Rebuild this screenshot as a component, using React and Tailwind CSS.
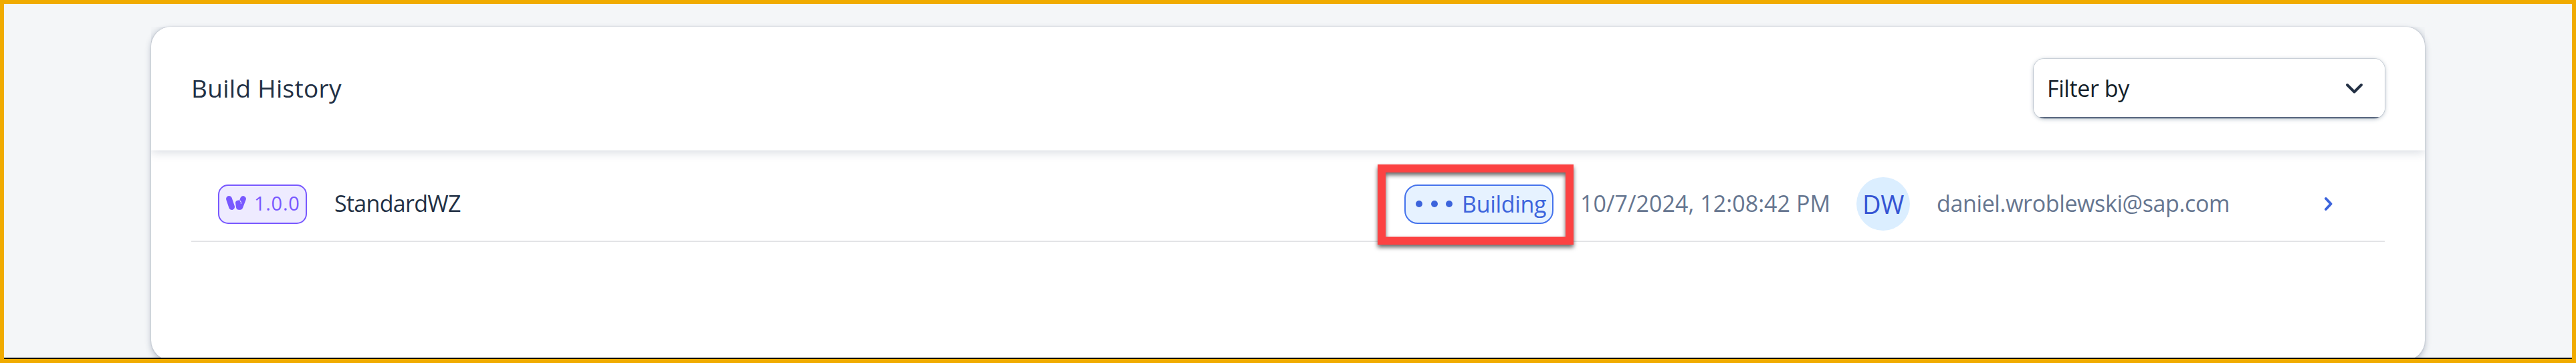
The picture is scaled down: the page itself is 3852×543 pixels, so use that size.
function BrandIcon() {
  return (
    <svg width="30" height="21" viewBox="0 0 30 21" fill="none" stroke="#7858ff" strokeLinecap="round" className="shrink-0">
      <path d="M4.5 4.5L8.6 16.5" strokeWidth="8.8" />
      <path d="M18.1 10.6L19 16.7" strokeWidth="8" />
      <path d="M25.6 4.4L21 16.5" strokeWidth="8.6" />
      <path d="M22.4 11.6C23 10 22.4 8.6 21 7.4" stroke="#eeebff" strokeWidth="1.1" />
    </svg>
  );
}

function Header() {
  return (
    <header className="flex h-[185px] shrink-0 items-center rounded-t-[30px] bg-white pr-[60px] pl-[60px] shadow-[0_2px_16px_rgba(34,53,90,0.2)] [clip-path:inset(0_0_-30px_0)]">
      <h1 className="pb-[2px] text-[37px] leading-[50px] font-normal tracking-[0.3px] text-[#223044]">Build History</h1>
      <button className="ml-auto flex h-[89px] w-[525px] items-center rounded-[16px] bg-[linear-gradient(to_top,#5b6980_2px,#fff_2px)] pr-[32px] pl-[20px] shadow-[0_0_0_1px_rgba(85,107,129,0.2),0_1px_6px_rgba(85,107,129,0.45)]">
        <span className="pb-[2px] text-[34px] leading-[46px] tracking-[-0.4px] text-[#131e29]">Filter by</span>
        <svg width="27" height="17" viewBox="0 0 27 17" fill="none" stroke="#233044" strokeWidth="4" strokeLinecap="round" strokeLinejoin="round" className="ml-auto">
          <path d="M3 3L13.5 13.5L24 3" />
        </svg>
      </button>
    </header>
  );
}

function BuildRow() {
  return (
    <div className="mx-[60px] mt-[25px] flex h-[112px] items-center border-b-2 border-[#e3e4e6] text-[34px] leading-[46px] whitespace-nowrap text-[#667690]">
      <div className="mt-px ml-[40px] flex h-[59px] w-[133px] items-center rounded-[15px] border-2 border-[#7858ff] bg-[#eeebff] pb-[5px] pl-[10px] text-[29px] text-[#7858ff]">
        <BrandIcon />
        <span className="ml-[12px] pt-px tracking-[0.7px]">1.0.0</span>
      </div>
      <span className="ml-[41px] w-[1600px] pb-[2px] tracking-[-0.7px] text-[#223044]">StandardWZ</span>

      <div className="relative mt-px flex h-[59px] w-[223px] items-center rounded-[20px] border-2 border-[#4573ec] bg-[#e6f2ff] pb-[2px] pl-[15px] text-[#3c64dc]">
        <span className="flex gap-[12.5px]">
          <i className="size-[10px] rounded-full bg-[#3c64dc]" />
          <i className="size-[10px] rounded-full bg-[#3c64dc]" />
          <i className="size-[10px] rounded-full bg-[#3c64dc]" />
        </span>
        <span className="ml-[14px] tracking-[-0.3px]">Building</span>
        <div className="absolute top-[-32px] left-[-42px] h-[120px] w-[293px] border-[12px] border-[#fc4242] [filter:drop-shadow(0_4px_3px_rgba(0,0,0,0.6))]" />
      </div>

      <span className="ml-[40px] w-[413px] pb-[2px] tracking-[0.05px]">10/7/2024, 12:08:42 PM</span>
      <div className="flex size-[80px] items-center justify-center rounded-full bg-[#dbeeff] text-[38px] tracking-[-0.4px] text-[#3554d3]">DW</div>
      <span className="ml-[40px] pb-[2px] tracking-[-0.37px]">daniel.wroblewski@sap.com</span>
      <svg width="14" height="22" viewBox="0 0 14 22" fill="none" stroke="#3c64dc" strokeWidth="4" strokeLinecap="round" strokeLinejoin="round" className="mr-[77px] ml-auto">
        <path d="M3 3L10.5 11L3 19" />
      </svg>
    </div>
  );
}

export default function App() {
  return (
    <main className="h-[543px] w-[3852px] overflow-hidden border-[6px] border-[#f0ab00] font-['Open_Sans','Liberation_Sans',sans-serif]">
      <div className="h-[531px] overflow-hidden border-b-2 border-black bg-[#f4f6f8] pt-[34px] pl-[220px]">
        <section className="flex h-[499px] w-[3400px] flex-col rounded-[30px] bg-white shadow-[0_0_2px_rgba(34,53,72,0.25),0_4px_10px_rgba(34,53,90,0.3)]">
          <Header />
          <BuildRow />
        </section>
      </div>
    </main>
  );
}
